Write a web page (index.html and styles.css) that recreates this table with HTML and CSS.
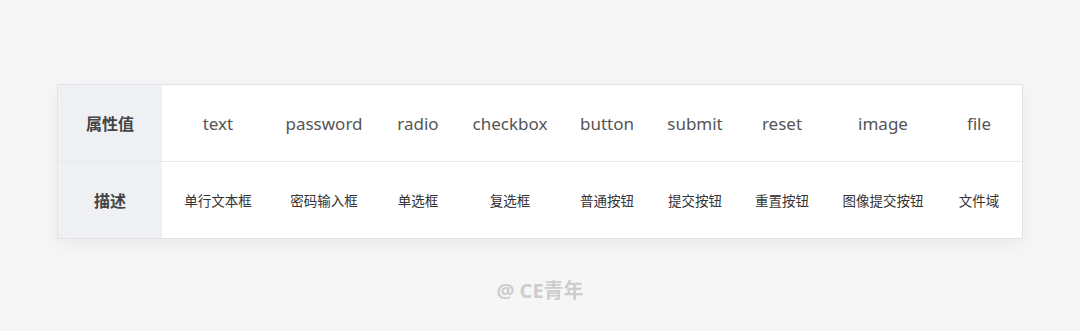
FILE: index.html
```html
<!DOCTYPE html>
<html lang="zh-CN">
<head>
    <meta charset="UTF-8">
    <meta name="viewport" content="width=device-width, initial-scale=1.0">
    <title>input type 属性值</title>
    <link rel="stylesheet" href="styles.css">
</head>
<body>
    <div class="page">
        <div class="type-table">
            <div class="cell head">属性值</div>
            <div class="cell en">text</div>
            <div class="cell en">password</div>
            <div class="cell en">radio</div>
            <div class="cell en">checkbox</div>
            <div class="cell en">button</div>
            <div class="cell en">submit</div>
            <div class="cell en">reset</div>
            <div class="cell en">image</div>
            <div class="cell en">file</div>

            <div class="cell head last">描述</div>
            <div class="cell zh last">单行文本框</div>
            <div class="cell zh last">密码输入框</div>
            <div class="cell zh last">单选框</div>
            <div class="cell zh last">复选框</div>
            <div class="cell zh last">普通按钮</div>
            <div class="cell zh last">提交按钮</div>
            <div class="cell zh last">重置按钮</div>
            <div class="cell zh last">图像提交按钮</div>
            <div class="cell zh last">文件域</div>
        </div>
        <div class="credit">@ CE青年</div>
    </div>
</body>
</html>
```

FILE: styles.css
```css
body {
    margin: 0;
    background-color: #f6f6f6;
    font-family: "Noto Sans", "Noto Sans CJK SC", sans-serif;
}

.page {
    height: 331px;
    padding-top: 84px;
    box-sizing: border-box;
}

.type-table {
    display: grid;
    grid-template-columns: 104px 112px 100px 88px 96px 98px 78px 96px 106px 86px;
    width: 966px;
    margin-left: 57px;
    border: 1px solid #e2e3e8;
    background-color: #fff;
    box-shadow: 0 6px 18px rgba(0, 0, 0, 0.05);
    box-sizing: border-box;
}

.cell {
    height: 76px;
    display: flex;
    align-items: center;
    justify-content: center;
    border-bottom: 1px solid #e8e9ec;
}

.cell.last {
    border-bottom: none;
}

.head {
    background-color: #eef0f4;
    font-family: "Noto Sans CJK SC", sans-serif;
    font-size: 16px;
    font-weight: 700;
    color: #444;
}

.en {
    font-size: 17px;
    color: #555;
}

.zh {
    font-family: "Noto Sans CJK SC", sans-serif;
    font-size: 13.5px;
    color: #333;
}

.credit {
    margin-top: 36px;
    text-align: center;
    font-family: "Noto Sans", "Noto Sans CJK SC", sans-serif;
    font-size: 20px;
    font-weight: 700;
    color: #cdcdcd;
}
```
